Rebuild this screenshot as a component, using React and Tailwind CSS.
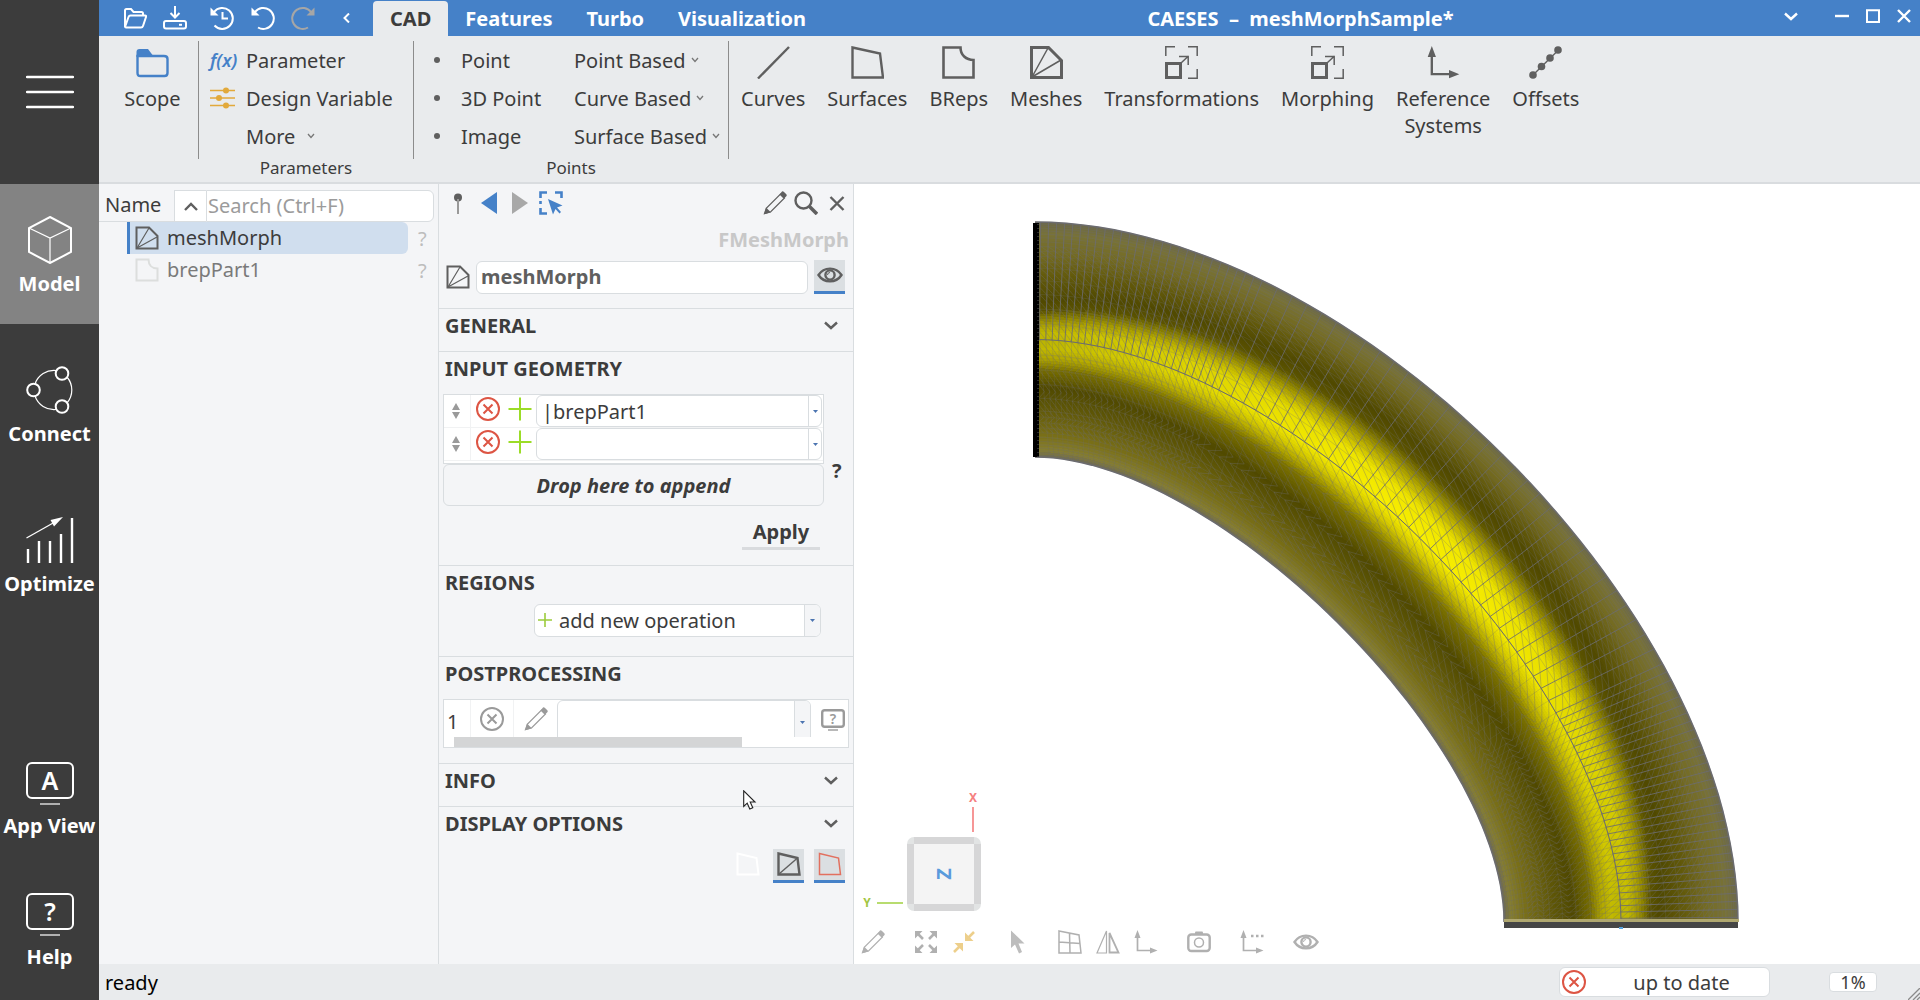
const INK = "#5f5f5f"

function Svg({ size = 24, w, h, box, children, className }) {
    return (
        <svg
            width={w || size}
            height={h || size}
            viewBox={box || `0 0 ${w || size} ${h || size}`}
            fill="none"
            stroke="currentColor"
            strokeWidth="2"
            className={className || "shrink-0"}
            aria-hidden="true"
        >
            {children}
        </svg>
    )
}

/* ---------- icons ---------- */

function MeshIcon() {
    return (
        <Svg>
            <path d="M1.5 1.5H14L22.5 10V22.5H1.5Z" />
            <path d="M2 22L14 2M2 22L22 11" strokeWidth="1.2" />
        </Svg>
    )
}

function BrepIcon() {
    return (
        <Svg>
            <path d="M1.5 1.5H13.5C13.5 7 17 10.5 22.5 10.5V22.5H1.5Z" />
        </Svg>
    )
}

function PencilIcon() {
    return (
        <Svg>
            <path d="M2 22.5L3.5 17L17.5 3L21.5 7L7.5 21Z" strokeWidth="1.2" />
            <path d="M0.5 23.5L3 16.5L7.8 21.2ZM16.5 3.5L19 0.5Q20 0 21 1L23.3 3.3Q24.2 4.3 23.3 5.3L20.8 7.8Z" fill="currentColor" stroke="none" />
        </Svg>
    )
}

function EyeIcon() {
    return (
        <Svg w={26} h={24}>
            <path d="M1.5 12C7 3.5 19 3.5 24.5 12C19 20.5 7 20.5 1.5 12Z" strokeWidth="2.4" />
            <circle cx="13" cy="12" r="4.6" strokeWidth="2.4" />
            <path d="M13 9.5A2.5 2.5 0 0 0 10.5 12" strokeWidth="1" />
        </Svg>
    )
}

function CrossCircle() {
    return (
        <Svg>
            <circle cx="12" cy="12" r="11" />
            <path d="M7.5 7.5L16.5 16.5M16.5 7.5L7.5 16.5" />
        </Svg>
    )
}

function PlusIcon() {
    return (
        <Svg>
            <path d="M12 0.5V23.5M0.5 12H23.5" />
        </Svg>
    )
}

function ChevronDown() {
    return (
        <Svg w={14} h={9}>
            <path d="M1 1.5L7 7L13 1.5" strokeWidth="2.4" />
        </Svg>
    )
}

function TinyChevron() {
    return (
        <Svg w={8} h={6}>
            <path d="M1 1L4 4.5L7 1" strokeWidth="1.3" stroke="#777" />
        </Svg>
    )
}

function AxesIcon({ size = 24, dots }) {
    return (
        <Svg size={size} box="0 0 24 24">
            <path d="M3.5 6V20.5H19" strokeWidth="1.7" />
            <path d="M3.5 0L6.5 8H0.5ZM23.5 20.5L16 17.5V23.5Z" fill="currentColor" stroke="none" />
            {dots && <path d="M11 6h2.5M16 6h2.5M21 6h2.5" strokeWidth="2.6" />}
        </Svg>
    )
}

function ScaleIcon() {
    return (
        <Svg size={33}>
            <path d="M0.8 10V0.8H10M23 0.8H32.2V10M32.2 23V32.2H23" strokeWidth="1.5" />
            <path d="M1.5 17.5H15.5V31.5H1.5Z" strokeWidth="3" />
            <path d="M16 17L23.5 10M14 10.5H23.2V19" strokeWidth="1.5" />
        </Svg>
    )
}

const ribbonIcons = {
    Curves: (
        <Svg size={33}>
            <path d="M1 32.5L32 1" strokeWidth="2.4" />
        </Svg>
    ),
    Surfaces: (
        <Svg size={33}>
            <path d="M1.5 1.5L29 7.5L32 31.5H1.5Z" strokeWidth="2.4" />
        </Svg>
    ),
    BReps: (
        <Svg size={33}>
            <path d="M1.5 1.5H18.5C18.5 9 24 14 31.5 14V31.5H1.5Z" strokeWidth="2.6" />
        </Svg>
    ),
    Meshes: (
        <Svg size={33}>
            <path d="M1.5 1.5H18.5L31.5 14.5V31.5H1.5Z" strokeWidth="3" />
            <path d="M2 31L18 2M2 31L31 14" strokeWidth="1.5" />
        </Svg>
    ),
    Transformations: <ScaleIcon />,
    Morphing: <ScaleIcon />,
    "Reference Systems": <AxesIcon size={33} />,
    Offsets: (
        <Svg size={33}>
            <path d="M4 29L29.5 4" strokeWidth="1.4" />
            <g fill="currentColor" stroke="none">
                <circle cx="4" cy="29" r="3.8" />
                <circle cx="12.5" cy="20.5" r="3.8" />
                <circle cx="21" cy="12" r="3.8" />
                <circle cx="29" cy="4" r="3.8" />
            </g>
        </Svg>
    ),
}

function ScreenIcon({ letter }) {
    return (
        <Svg w={48} h={44}>
            <rect x="1" y="1" width="46" height="35" rx="5" />
            <path d="M14 42H34" strokeWidth="1.2" />
            <text x="24" y="28" textAnchor="middle" fontSize="25" fontWeight="600" fill="currentColor" stroke="none">
                {letter}
            </text>
        </Svg>
    )
}

const sideIcons = {
    Model: (
        <Svg w={44} h={48}>
            <path d="M22 1L43 12V36L22 47L1 36V12Z" />
            <path d="M1 12L22 22L43 12M22 22V47" strokeWidth="1.2" />
        </Svg>
    ),
    Connect: (
        <Svg w={48} h={48}>
            <path d="M9 18A20 20 0 0 1 30 4.5M41 11A20 20 0 0 1 41 37M30 43.5A20 20 0 0 1 9 30" strokeWidth="1.2" />
            <circle cx="7.5" cy="24" r="6.3" />
            <circle cx="36" cy="7.5" r="6.3" />
            <circle cx="36" cy="40.5" r="6.3" />
        </Svg>
    ),
    Optimize: (
        <Svg w={48} h={48}>
            <path d="M2 33V47M13 25V47M24 25V47M35 18V47M46 2V47" strokeWidth="2.4" />
            <path d="M0.5 22L28 6.5" strokeWidth="1.3" />
            <path d="M37 1L24.5 4L28 10.5Z" fill="currentColor" stroke="none" />
        </Svg>
    ),
    "App View": <ScreenIcon letter="A" />,
    Help: <ScreenIcon letter="?" />,
}

/* ---------- shell ---------- */

function SideItem({ label, active }) {
    return (
        <button
            type="button"
            className={
                "flex w-full flex-col items-center gap-[6px] whitespace-nowrap font-bold text-white " +
                (active ? "h-[140px] bg-[#838383] pt-8" : "")
            }
        >
            {sideIcons[label]}
            <span>{label}</span>
        </button>
    )
}

function Sidebar() {
    return (
        <nav className="flex w-[99px] shrink-0 flex-col bg-[#3c3c3c]">
            <button type="button" aria-label="Menu" className="flex h-[184px] shrink-0 items-center justify-center text-white">
                <Svg w={48} h={34}>
                    <path d="M1 2H47M1 17H47M1 32H47" strokeWidth="2.4" strokeLinecap="round" />
                </Svg>
            </button>
            <SideItem label="Model" active />
            <div className="mt-[42px] flex flex-col gap-[69px]">
                <SideItem label="Connect" />
                <SideItem label="Optimize" />
            </div>
            <div className="mt-auto flex flex-col gap-[54px] pb-[30px]">
                <SideItem label="App View" />
                <SideItem label="Help" />
            </div>
        </nav>
    )
}

function TitleBar() {
    return (
        <header className="flex h-9 bg-[#4581c8] pl-6 font-bold text-white">
            <div className="flex items-center">
                <button type="button" aria-label="Open">
                    <Svg>
                        <path d="M2 21V4.5Q2 3 3.5 3H8L10.5 6H18.5Q20 6 20 7.5V9.5M2 21L5.5 11Q6 9.5 7.5 9.5H22Q23.5 9.5 23 11L20 20Q19.5 21.5 18 21.5H3Q2 21.5 2 20" />
                    </Svg>
                </button>
                <button type="button" aria-label="Save" className="ml-4">
                    <Svg>
                        <path d="M12 0V11M7.5 7L12 11.5L16.5 7" />
                        <rect x="1" y="15" width="22" height="7.5" rx="2" />
                        <path d="M16 18.8h3" />
                    </Svg>
                </button>
                <button type="button" aria-label="History" className="ml-[23px]">
                    <Svg>
                        <path d="M4 6A10.5 10.5 0 1 1 4.5 19.5" />
                        <path d="M0.5 1.5V9.5H8.5Z" fill="currentColor" stroke="none" />
                        <path d="M12.5 6V12.5H18" />
                    </Svg>
                </button>
                <button type="button" aria-label="Undo" className="ml-[17px]">
                    <Svg>
                        <path d="M4 6A10.5 10.5 0 1 1 7 21.5" />
                        <path d="M0.5 1.5V9.5H8.5Z" fill="currentColor" stroke="none" />
                    </Svg>
                </button>
                <button type="button" aria-label="Redo" className="ml-4 text-[#a6a6a6]">
                    <Svg>
                        <path d="M20 6A10.5 10.5 0 1 0 17 21.5" />
                        <path d="M23.5 1.5V9.5H15.5Z" fill="currentColor" stroke="none" />
                    </Svg>
                </button>
                <button type="button" aria-label="Collapse" className="ml-7">
                    <Svg w={7} h={10}>
                        <path d="M6 0.5L1.5 5L6 9.5" />
                    </Svg>
                </button>
            </div>
            <div className="ml-[23px] flex pt-px">
                <button type="button" className="rounded-t bg-[#e9ebed] px-[17px] text-[#3c3c3c]">
                    CAD
                </button>
                <button type="button" className="px-[17px]">
                    Features
                </button>
                <button type="button" className="px-[17px]">
                    Turbo
                </button>
                <button type="button" className="px-[17px]">
                    Visualization
                </button>
            </div>
            <h1 className="flex flex-1 items-center justify-center pr-[6px]">CAESES&nbsp;&nbsp;–&nbsp;&nbsp;meshMorphSample*</h1>
            <div className="flex items-start pt-2 pr-2">
                <button type="button" aria-label="Ribbon" className="mr-9 flex h-4 items-center">
                    <ChevronDown />
                </button>
                <button type="button" aria-label="Minimize" className="mr-4">
                    <Svg w={16} h={16}>
                        <path d="M1 8H15" strokeWidth="2.4" />
                    </Svg>
                </button>
                <button type="button" aria-label="Maximize" className="mr-4">
                    <Svg w={14} h={16}>
                        <path d="M1 2.2H13V14H1Z" />
                    </Svg>
                </button>
                <button type="button" aria-label="Close">
                    <Svg w={16} h={16}>
                        <path d="M2 2L14 14M14 2L2 14" strokeWidth="2.4" />
                    </Svg>
                </button>
            </div>
        </header>
    )
}

function Separator() {
    return <div className="mt-[5px] h-[118px] w-px shrink-0 bg-[#8c8c8c]" />
}

function Ribbon() {
    return (
        <div className="flex h-[148px] shrink-0 border-b-2 border-[#d9dcdf] bg-[#e9ebed] whitespace-nowrap">
            <button type="button" className="flex w-[99px] flex-col items-center pt-3 pl-2">
                <Svg w={33} h={33} className="shrink-0 text-[#4581c8]">
                    <path d="M1.5 8H28Q31.5 8 31.5 11V25Q31.5 28 28.5 28H4.5Q1.5 28 1.5 25Z" strokeWidth="2.4" />
                    <path d="M0.5 9V4Q0.5 1 3.5 1H12L16.5 7V9Z" fill="currentColor" stroke="none" />
                </Svg>
                <span className="mt-1">Scope</span>
            </button>
            <Separator />
            <section className="w-[214px] pt-[5px]">
                <div className="h-[114px]">
                    <button type="button" className="flex h-[38px] items-center pl-[11px]">
                        <span className="w-9 text-left text-[18px] font-semibold italic text-[#4581c8]">f(x)</span>
                        Parameter
                    </button>
                    <button type="button" className="flex h-[38px] items-center pl-[11px]">
                        <span className="w-9 text-[#e2a93b]">
                            <Svg w={25} h={22}>
                                <path d="M0 3.5H25M0 11H25M0 18.5H25" strokeWidth="1.4" />
                                <g fill="currentColor" stroke="none">
                                    <circle cx="16" cy="3.5" r="3" />
                                    <circle cx="9" cy="11" r="3" />
                                    <circle cx="16" cy="18.5" r="3" />
                                </g>
                            </Svg>
                        </span>
                        Design Variable
                    </button>
                    <button type="button" className="flex h-[38px] items-center gap-3 pl-[47px]">
                        More <TinyChevron />
                    </button>
                </div>
                <h2 className="pt-px text-center text-[17px] leading-6">Parameters</h2>
            </section>
            <Separator />
            <section className="w-[314px] pt-[5px]">
                <div className="flex h-[114px]">
                    <div className="w-[160px]">
                        {["Point", "3D Point", "Image"].map((item) => (
                            <button type="button" key={item} className="flex h-[38px] items-center pl-5">
                                <span className="mr-[21px] size-[6px] rounded-full bg-[#5f5f5f]" />
                                {item}
                            </button>
                        ))}
                    </div>
                    <div>
                        {["Point Based", "Curve Based", "Surface Based"].map((item) => (
                            <button type="button" key={item} className="flex h-[38px] items-center gap-[5px]">
                                {item} <TinyChevron />
                            </button>
                        ))}
                    </div>
                </div>
                <h2 className="pt-px text-center text-[17px] leading-6">Points</h2>
            </section>
            <Separator />
            <div className="flex items-start gap-[22px] pt-[10px] pl-3">
                {Object.keys(ribbonIcons).map((label) => (
                    <button type="button" key={label} className="flex flex-col items-center">
                        <span className="text-[#5f5f5f]">{ribbonIcons[label]}</span>
                        <span className="mt-[6px]">
                            {label.split(" ").map((word) => (
                                <span className="block" key={word}>
                                    {word}
                                </span>
                            ))}
                        </span>
                    </button>
                ))}
            </div>
        </div>
    )
}

function Tree() {
    return (
        <aside className="w-[339px] shrink-0 bg-[#f4f5f7]">
            <div className="flex h-[38px] items-end">
                <label htmlFor="tree-search" className="h-8 w-[75px] border-b border-[#d9dde0] pl-[6px] leading-[30px]">
                    Name
                </label>
                <button type="button" aria-label="Sort" className="flex h-8 w-8 items-center justify-center border border-r-0 border-[#d9dde0] bg-white">
                    <Svg w={14} h={9}>
                        <path d="M1 8L7 2L13 8" strokeWidth="2.4" stroke={INK} />
                    </Svg>
                </button>
                <input
                    id="tree-search"
                    type="search"
                    placeholder="Search (Ctrl+F)"
                    className="h-8 w-[228px] rounded-r-md border border-[#d9dde0] bg-white pb-px pl-px outline-none placeholder:text-[#9b9b9b]"
                />
            </div>
            <ul>
                <li className="flex h-8 items-center pl-7">
                    <button type="button" className="flex h-8 w-[281px] items-center gap-2 rounded-r-md border-l-3 border-[#4581c8] bg-[#d0deee] pl-[5px]">
                        <span className="text-[#5f5f5f]">
                            <MeshIcon />
                        </span>
                        <span className="pb-[2px]">meshMorph</span>
                    </button>
                    <span className="ml-[10px] text-[#bdbdbd]">?</span>
                </li>
                <li className="flex h-8 items-center pl-7 text-[#7a7a7a]">
                    <button type="button" className="flex h-8 w-[281px] items-center gap-2 pl-2">
                        <span className="text-[#dcdedd]">
                            <BrepIcon />
                        </span>
                        <span className="pb-[2px]">brepPart1</span>
                    </button>
                    <span className="ml-[10px] text-[#bdbdbd]">?</span>
                </li>
            </ul>
        </aside>
    )
}

function Combo({ label, value, className = "", tinted, children }) {
    return (
        <div className={"flex overflow-hidden border border-[#d9dde0] bg-white " + className}>
            {children}
            <select aria-label={label} className="min-w-0 flex-1 appearance-none bg-transparent outline-none">
                <option>{value}</option>
            </select>
            <span className={"flex items-center justify-center border-l border-[#d9dde0] " + (tinted ? "w-4 bg-[#f4f5f7]" : "w-[13px]")}>
                <Svg w={5} h={3}>
                    <path d="M0 0H5L2.5 3Z" fill="#4b74b0" stroke="none" />
                </Svg>
            </span>
        </div>
    )
}

function Section({ title, open, className = "", children }) {
    return (
        <section className={"border-t border-[#d9dde0] pt-[3px] " + className}>
            <div className="flex items-center justify-between pr-[15px] pb-px pl-[6px]">
                <h3 className="font-bold">{title}</h3>
                {!open && (
                    <button type="button" aria-label={"Toggle " + title} className="text-[#5f5f5f]">
                        <ChevronDown />
                    </button>
                )}
            </div>
            {children}
        </section>
    )
}

function GeometryRow({ value }) {
    return (
        <div className="flex h-[33px] border-b border-[#f1f2f3]">
            <div className="flex w-[27px] items-center justify-center border-r border-[#f1f2f3] pr-[3px] text-[#9a9a9a]">
                <Svg w={8} h={16}>
                    <path d="M4 0L8 7H0ZM4 16L0 9H8Z" fill="currentColor" stroke="none" />
                </Svg>
            </div>
            <div className="flex flex-1 items-start gap-2 pt-[2px] pl-[5px]">
                <button type="button" aria-label="Remove" className="text-[#dd5544]">
                    <CrossCircle />
                </button>
                <button type="button" aria-label="Add" className="text-[#9bdc28]">
                    <PlusIcon />
                </button>
            </div>
            <Combo label="Geometry" value={value} className="mr-px h-8 w-[286px] rounded-md pl-[5px]" />
        </div>
    )
}

function Details() {
    return (
        <aside className="relative w-[416px] shrink-0 border-x border-[#d9dde0] bg-[#f4f5f7]">
            <div className="mt-[7px] flex gap-[7px] pr-1 pl-[7px] text-[#5f5f5f]">
                <button type="button" aria-label="Pin">
                    <Svg>
                        <circle cx="12" cy="6.5" r="4" fill="currentColor" stroke="none" />
                        <path d="M12 8V23" stroke="#999" />
                    </Svg>
                </button>
                <button type="button" aria-label="Back" className="text-[#4581c8]">
                    <Svg>
                        <path d="M20 1V23L4 12Z" fill="currentColor" stroke="none" />
                    </Svg>
                </button>
                <button type="button" aria-label="Forward" className="text-[#a8a8a8]">
                    <Svg>
                        <path d="M4 1V23L20 12Z" fill="currentColor" stroke="none" />
                    </Svg>
                </button>
                <button type="button" aria-label="Select" className="text-[#4581c8]">
                    <Svg>
                        <path d="M1.5 7V1.5H8M16 1.5H22.5V7M1.5 17V22.5H8M1.5 10V13" strokeWidth="2.6" />
                        <path d="M9 8L23.5 14.5L18 16.5L22 21L20.5 22.5L16.5 18L14 23.5Z" fill="currentColor" stroke="none" />
                    </Svg>
                </button>
                <span className="flex-1" />
                <button type="button" aria-label="Edit">
                    <PencilIcon />
                </button>
                <button type="button" aria-label="Find">
                    <Svg>
                        <circle cx="9.5" cy="9.5" r="8" strokeWidth="2.4" />
                        <path d="M15 15L23 23" strokeWidth="3.6" />
                    </Svg>
                </button>
                <button type="button" aria-label="Close">
                    <Svg>
                        <path d="M5.5 6L18.5 19M18.5 6L5.5 19" strokeWidth="2.4" />
                    </Svg>
                </button>
            </div>
            <p className="mt-[11px] pr-1 text-right font-bold text-[#c8c8c8]">FMeshMorph</p>
            <div className="mt-[7px] mb-[14px] flex h-[34px] items-center gap-[6px] pr-2 pl-[7px] text-[#5f5f5f]">
                <MeshIcon />
                <input
                    aria-label="Object name"
                    defaultValue="meshMorph"
                    className="h-[33px] min-w-0 flex-1 rounded-md border border-[#d9dde0] bg-white px-1 pb-px font-bold outline-none"
                />
                <button type="button" aria-label="Visible" className="flex h-[34px] w-[31px] justify-center border-b-3 border-[#4581c8] bg-[#dbdfe2] pt-[3px]">
                    <EyeIcon />
                </button>
            </div>

            <Section title="GENERAL" className="h-[43px]" />

            <Section title="INPUT GEOMETRY" open className="pb-[15px]">
                <div className="mt-[11px] flex pl-1">
                    <div className="w-[381px]">
                        <div className="h-[70px] border border-[#d9dde0] bg-white">
                            <GeometryRow value="|brepPart1" />
                            <GeometryRow value="" />
                        </div>
                        <div className="flex h-[42px] items-center justify-center rounded-md border border-[#d9dde0] font-bold italic">
                            Drop here to append
                        </div>
                    </div>
                    <span className="pt-[63px] pl-2 font-bold">?</span>
                </div>
                <div className="mt-[10px] flex justify-end pr-[33px]">
                    <button type="button" className="h-[34px] w-[78px] border-b-3 border-[#d9dbde] font-bold">
                        Apply
                    </button>
                </div>
            </Section>

            <Section title="REGIONS" open className="pb-[19px]">
                <div className="mt-[7px] flex justify-end pr-8">
                    <Combo label="Operation" value="add new operation" tinted className="h-[33px] w-[287px] rounded-md pl-[3px]">
                        <Svg w={14} h={14} className="mt-2 mr-[7px] shrink-0 text-[#9ccc3c]">
                            <path d="M7 0V14M0 7H14" strokeWidth="1.6" />
                        </Svg>
                    </Combo>
                </div>
            </Section>

            <Section title="POSTPROCESSING" open className="pb-[15px]">
                <div className="mt-[11px] mr-1 ml-1 border border-[#d9dde0] bg-white">
                    <div className="flex h-[37px] overflow-hidden text-[#9a9a9a]">
                        <span className="w-[27px] border-r border-[#f1f2f3] pt-2 pl-[3px] text-[#3c3c3c]">1</span>
                        <button type="button" aria-label="Remove" className="flex w-[43px] justify-center border-r border-[#f1f2f3] pt-[7px]">
                            <CrossCircle />
                        </button>
                        <button type="button" aria-label="Edit" className="flex w-[43px] justify-center pt-[7px]">
                            <PencilIcon />
                        </button>
                        <Combo label="Postprocessing" value="" tinted className="h-11 w-[254px] rounded-md" />
                        <button type="button" aria-label="Help" className="flex flex-1 justify-end pt-[9px] pr-[3px]">
                            <Svg w={24} h={22}>
                                <rect x="1.2" y="1.2" width="21.6" height="16.5" rx="2.5" strokeWidth="2.4" />
                                <path d="M7 21H17" strokeWidth="1.4" />
                                <text x="12" y="14.5" textAnchor="middle" fontSize="14" fontWeight="600" fill="currentColor" stroke="none">
                                    ?
                                </text>
                            </Svg>
                        </button>
                    </div>
                    <div className="flex h-[10px] px-[10px]">
                        <div className="w-3/4 bg-[#d4d5d6]" />
                    </div>
                </div>
            </Section>

            <Section title="INFO" className="h-[43px]" />

            <Section title="DISPLAY OPTIONS">
                <div className="mt-[11px] flex justify-end gap-[10px] pr-2">
                    <button type="button" aria-label="Plain" className="flex h-[34px] w-[31px] justify-center pt-[3px] text-white">
                        <Svg>
                            <path d="M1.5 1.5L20.5 6L22.5 22.5H1.5Z" />
                        </Svg>
                    </button>
                    <button type="button" aria-label="Edges" className="flex h-[34px] w-[31px] justify-center border-b-3 border-[#4581c8] bg-[#dbdfe2] pt-[3px] text-[#5f5f5f]">
                        <Svg>
                            <path d="M1.5 1.5L20.5 6L22.5 22.5H1.5Z" strokeWidth="2.4" />
                            <path d="M2 22L20.5 6" strokeWidth="1.4" />
                        </Svg>
                    </button>
                    <button type="button" aria-label="Outline" className="flex h-[34px] w-[31px] justify-center border-b-3 border-[#4581c8] bg-[#dbdfe2] pt-[3px] text-[#e2705f]">
                        <Svg>
                            <path d="M1.5 1.5L20.5 6L22.5 22.5H1.5Z" strokeWidth="1.5" />
                        </Svg>
                    </button>
                </div>
            </Section>

            <Svg w={14} h={20} className="absolute top-[606px] left-[304px]">
                <path d="M0.7 0.8V16.5L4.2 13.2L6.8 19L9.8 17.7L7.2 12H12Z" fill="#fff" stroke="#222" strokeWidth="1.1" />
            </Svg>
        </aside>
    )
}

/* ---------- 3D view ---------- */

const outer = [[181, 38], [493, 38], [884, 427], [884, 738]]
const inner = [[181, 273], [361, 273], [650, 558], [650, 738]]

function bezier(c, t) {
    const u = 1 - t
    const w = [u * u * u, 3 * u * u * t, 3 * u * t * t, t * t * t]
    return [0, 1].map((i) => w.reduce((sum, k, n) => sum + k * c[n][i], 0))
}

// s runs from the outer edge (0) to the inner edge (1), t along the pipe
function at(s, t) {
    const a = bezier(outer, t)
    const b = bezier(inner, t)
    return [a[0] + (b[0] - a[0]) * s, a[1] + (b[1] - a[1]) * s]
}

function point(s, t) {
    const [x, y] = at(s, t)
    return x.toFixed(1) + " " + y.toFixed(1)
}

const stops = [
    [0, [108, 104, 70]],
    [0.05, [120, 114, 56]],
    [0.14, [116, 107, 34]],
    [0.24, [98, 89, 10]],
    [0.34, [80, 73, 0]],
    [0.38, [92, 84, 0]],
    [0.44, [190, 178, 0]],
    [0.48, [240, 230, 0]],
    [0.54, [248, 238, 0]],
    [0.58, [206, 194, 0]],
    [0.63, [124, 114, 0]],
    [0.7, [80, 73, 0]],
    [0.78, [94, 86, 6]],
    [0.9, [120, 110, 22]],
    [0.97, [134, 126, 48]],
    [1, [110, 106, 80]],
]

// the highlight gets wider towards the middle of the bend
function warp(s, t) {
    const lo = 0.34 - 0.13 * Math.sin(Math.PI * t)
    const hi = 0.7 + 0.03 * Math.sin(Math.PI * t)
    if (s < lo) return (s / lo) * 0.34
    if (s < hi) return 0.34 + ((s - lo) / (hi - lo)) * 0.36
    return 0.7 + ((s - hi) / (1 - hi)) * 0.3
}

function shade(pos, t) {
    const s = warp(pos, t)
    let i = 1
    while (stops[i][0] < s && i < stops.length - 1) i++
    const [s0, c0] = stops[i - 1]
    const [s1, c1] = stops[i]
    const k = (s - s0) / (s1 - s0)
    const ridge = Math.exp(-Math.pow((s - 0.52) / 0.09, 2))
    const gain = 1 - ridge * 0.24 * (1 - Math.sin(Math.PI * t))
    return "rgb(" + c0.map((c, n) => Math.round((c + (c1[n] - c) * k) * gain)).join(",") + ")"
}

const BANDS = 90
const STEPS = 48

const patches = []
for (let i = 0; i < BANDS; i++) {
    for (let j = 0; j < STEPS; j++) {
        const s0 = i / BANDS
        const s1 = Math.min(1, (i + 1.3) / BANDS)
        const t0 = j / STEPS
        const t1 = Math.min(1, (j + 1.1) / STEPS)
        patches.push({
            d: `M${point(s0, t0)}L${point(s0, t1)}L${point(s1, t1)}L${point(s1, t0)}Z`,
            fill: shade((i + 0.5) / BANDS, (j + 0.5) / STEPS),
        })
    }
}

function along(s) {
    let d = "M" + point(s, 0)
    for (let j = 1; j <= 60; j++) d += "L" + point(s, j / 60)
    return d
}

// rings are close together at both ends and wide apart in the bend
const rings = []
for (let t = 0.006; t < 1; t += t < 0.23 || t > 0.72 ? 0.0085 : 0.0155) rings.push(t)

const rows = Array.from({ length: 49 }, (_, k) => 0.5 - 0.5 * Math.cos((Math.PI * k) / 48))
const edgeRows = rows.filter((s, k) => s < 0.22 || s > 0.78 || k % 2 === 0)

const ringPath = rings.map((t) => `M${point(0, t)}L${point(0.5, t)}`).join("")
const innerRingPath = rings.map((t) => `M${point(0.5, t)}L${point(1, Math.min(1, t + 0.02))}`).join("")
const rowPath = edgeRows.map(along).join("")

// outer half: split quads; inner half: slanted strokes, every fourth one mirrored
const diagonalPath = rings
    .slice(1)
    .map((t, n) =>
        rows
            .slice(1)
            .map((s, k) => {
                const from = rings[n]
                if (s < 0.12 || s > 0.9) return ""
                if (s <= 0.5) return `M${point(rows[k], from)}L${point(s, t)}`
                return k % 4 < 3 ? `M${point(rows[k], from)}L${point(s, t)}` : `M${point(s, from)}L${point(rows[k], t)}`
            })
            .join("")
    )
    .join("")
const outline = along(0) + "M" + along(1).slice(1)

function Viewport() {
    return (
        <svg
            className="absolute inset-0 h-full w-full"
            viewBox="0 0 1066 780"
            preserveAspectRatio="xMidYMid meet"
            role="img"
            aria-label="Morphed pipe mesh"
        >
            <g shapeRendering="crispEdges">
                {patches.map((p, i) => (
                    <path key={i} d={p.d} fill={p.fill} />
                ))}
            </g>
            <g fill="none" stroke="#6c6c70">
                <path d={rowPath} strokeWidth="0.6" opacity="0.45" />
                <path d={diagonalPath} strokeWidth="0.6" opacity="0.6" />
                <path d={innerRingPath} strokeWidth="0.6" opacity="0.4" />
                <path d={ringPath} strokeWidth="1" opacity="0.85" />
                <path d={along(0.5)} />
                <path d={outline} strokeWidth="1.4" />
            </g>
            <rect x="179" y="39" width="6" height="234" fill="#000" />
            <path d="M184 40V273" stroke="#555" strokeDasharray="1 3" />
            <rect x="650" y="735" width="235" height="3" fill="#b0a870" />
            <rect x="650" y="738" width="234" height="6" fill="#464646" />
            <rect x="765" y="743" width="4" height="2" fill="#5aa5e0" />

            <g fill="none" strokeWidth="1.4">
                <path d="M119 623V648" stroke="#f26a6a" />
                <path d="M23 719H49" stroke="#9acd32" />
            </g>
            <g fontSize="12" fontWeight="700" textAnchor="middle">
                <text x="119" y="618" fill="#f58080">X</text>
                <text x="13" y="723" fill="#a3c644">Y</text>
            </g>
            <rect x="53" y="653" width="74" height="74" rx="7" fill="#e2e4e4" />
            <path d="M60 653H120V660H60ZM60 720H120V727H60ZM53 660H60V720H53ZM120 660H127V720H120Z" fill="#d6d6d7" />
            <rect x="60" y="660" width="60" height="60" fill="#f4f4f4" />
            <text x="0" y="0" transform="translate(97 690) rotate(-90)" textAnchor="middle" fontSize="20" fontWeight="700" fill="#5a9bdc">
                Z
            </text>
        </svg>
    )
}

function ViewTools() {
    return (
        <div className="relative mt-auto flex pb-[10px] pl-[7px] text-[#b0b0b0]">
            <button type="button" aria-label="Edit">
                <PencilIcon />
            </button>
            <button type="button" aria-label="Fit" className="ml-[29px]">
                <Svg>
                    <path d="M3 3L9 9M21 3L15 9M3 21L9 15M21 21L15 15" strokeWidth="2.6" />
                    <path d="M1 1H8.5L1 8.5ZM23 1H15.5L23 8.5ZM1 23H8.5L1 15.5ZM23 23H15.5L23 15.5Z" fill="currentColor" stroke="none" />
                </Svg>
            </button>
            <button type="button" aria-label="Shrink" className="ml-[14px] text-[#edcf8b]">
                <Svg>
                    <path d="M22 2L15.5 8.5M2 22L8.5 15.5" strokeWidth="2.6" />
                    <path d="M13 2.5V11H21.5ZM2.5 13H11V21.5Z" fill="currentColor" stroke="none" />
                </Svg>
            </button>
            <button type="button" aria-label="Pick" className="ml-[29px]">
                <Svg>
                    <path d="M6 0.5V18L10 14.5L14 23.5L17 22L13.5 13.5H19.5Z" fill="#bdbdbd" stroke="none" />
                </Svg>
            </button>
            <button type="button" aria-label="Grid" className="ml-[29px]">
                <Svg>
                    <path d="M1 1L21 5L23 23H1ZM11.5 3L12 23M1 12L22 13.5" strokeWidth="1.5" />
                </Svg>
            </button>
            <button type="button" aria-label="Mirror" className="ml-[14px]">
                <Svg>
                    <path d="M10.5 1V23H1Z" strokeWidth="1.2" />
                    <path d="M13.5 3V22.5H22.5Z" strokeWidth="1.8" />
                </Svg>
            </button>
            <button type="button" aria-label="Axes" className="ml-[14px]">
                <AxesIcon />
            </button>
            <button type="button" aria-label="Snapshot" className="ml-[29px]">
                <Svg>
                    <rect x="1.3" y="4.5" width="21.4" height="16.5" rx="3" strokeWidth="2.4" />
                    <path d="M8 4V2.5Q8 1.5 9 1.5H15Q16 1.5 16 2.5V4Z" fill="currentColor" stroke="none" />
                    <circle cx="12" cy="12.5" r="4.5" strokeWidth="1.5" />
                </Svg>
            </button>
            <button type="button" aria-label="Origin" className="ml-[29px]">
                <AxesIcon dots />
            </button>
            <button type="button" aria-label="Visibility" className="ml-[29px]">
                <EyeIcon />
            </button>
        </div>
    )
}

function StatusBar() {
    return (
        <footer className="flex h-9 shrink-0 items-center bg-[#e9ebed] pl-[6px]">
            <span className="flex-1 text-black">ready</span>
            <div className="mr-[59px] flex h-[30px] w-[211px] items-center rounded-md border border-[#d9dde0] bg-white pl-[2px]">
                <button type="button" aria-label="Cancel" className="text-[#dd5544]">
                    <CrossCircle />
                </button>
                <span className="flex-1 pl-2 text-center">up to date</span>
            </div>
            <span className="mr-[31px] h-5 w-12 rounded border border-[#d9dde0] bg-white text-center text-[18px] leading-[18px]">1%</span>
            <Svg w={12} h={12} className="shrink-0 self-end text-[#8a8a8a]">
                <path d="M0 12L12 0M5 12L12 5M9 12L12 9" strokeWidth="1.3" />
            </Svg>
        </footer>
    )
}

export default function App() {
    return (
        <div className="flex h-screen overflow-hidden font-['Noto_Sans',sans-serif] text-[20px] leading-[27px] text-[#3c3c3c]">
            <Sidebar />
            <div className="flex min-w-0 flex-1 flex-col">
                <TitleBar />
                <Ribbon />
                <div className="flex min-h-0 flex-1">
                    <Tree />
                    <Details />
                    <main className="relative flex min-w-0 flex-1 flex-col bg-white">
                        <Viewport />
                        <ViewTools />
                    </main>
                </div>
                <StatusBar />
            </div>
        </div>
    )
}
